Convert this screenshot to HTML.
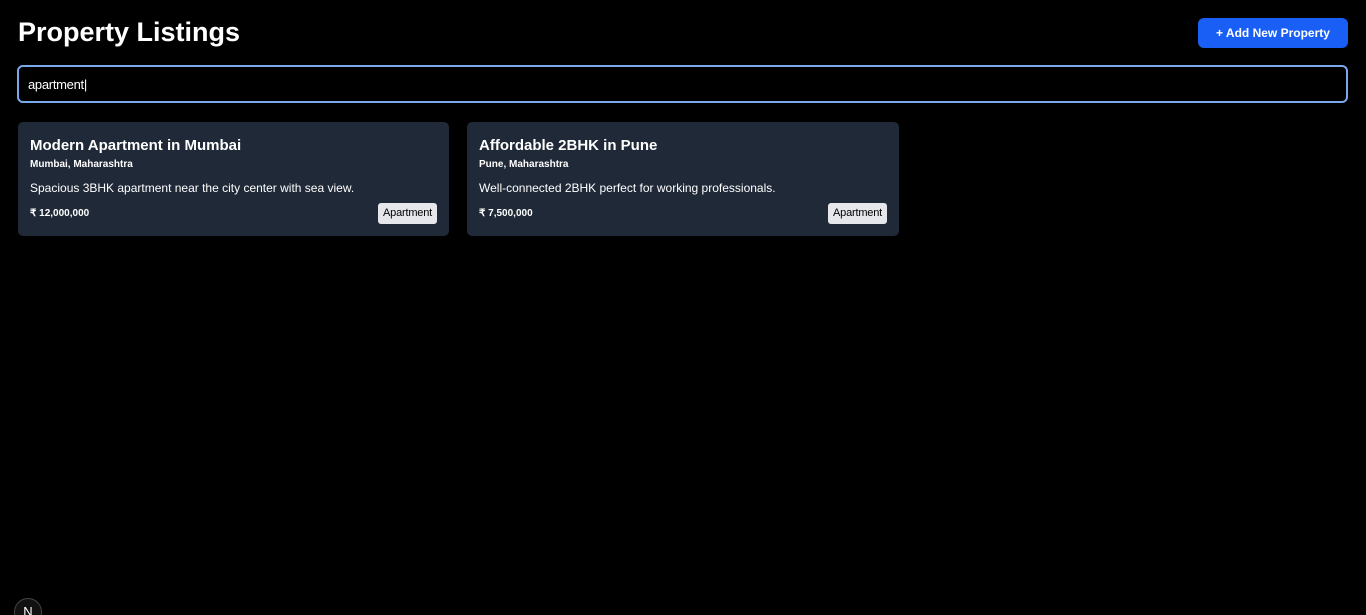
<!DOCTYPE html>
<html><head><meta charset="utf-8"><style>
html,body{margin:0;background:#000;font-family:"Liberation Sans",sans-serif;color:#fff;width:1366px;height:615px;overflow:hidden;position:relative}
h1{position:absolute;left:18px;top:17px;margin:0;font-size:27px;font-weight:bold}
.btn{position:absolute;left:1198px;top:18px;width:150px;height:30px;background:#1a5ff5;border-radius:6px;font-size:12px;font-weight:bold;text-align:center;line-height:30px}
.search{position:absolute;border:2px solid #7aa8e8;border-radius:6px;width:1327px;height:34px;left:17px;top:65px}
.search span{position:absolute;left:9px;top:10px;font-size:13px;letter-spacing:-0.3px}
.card{position:absolute;top:122px;width:431px;height:114px;background:#1f2937;border-radius:5px}
.t{position:absolute;left:12px;top:15px;font-size:15px;font-weight:bold}
.l{position:absolute;left:12px;top:37px;font-size:10px;font-weight:bold}
.d{position:absolute;left:12px;top:59px;font-size:12px}
.p{position:absolute;left:12px;top:86px;font-size:10px;font-weight:bold}
.tag{position:absolute;right:12px;top:81px;background:#e5e7eb;color:#000;font-size:11px;padding:0 5px;height:21px;line-height:21px;border-radius:3px;letter-spacing:-0.2px}
.n{position:absolute;left:14px;top:598px;width:26px;height:26px;border-radius:50%;background:#111;border:1px solid #444;font-size:13px;text-align:center;line-height:26px}
</style></head><body>
<h1>Property Listings</h1>
<div class="btn">+ Add New Property</div>
<div class="search"><span>apartment|</span></div>
<div class="card" style="left:18px"><div class="t">Modern Apartment in Mumbai</div><div class="l">Mumbai, Maharashtra</div><div class="d">Spacious 3BHK apartment near the city center with sea view.</div><div class="p">₹ 12,000,000</div><div class="tag">Apartment</div></div>
<div class="card" style="left:467px;width:432px"><div class="t">Affordable 2BHK in Pune</div><div class="l">Pune, Maharashtra</div><div class="d">Well-connected 2BHK perfect for working professionals.</div><div class="p">₹ 7,500,000</div><div class="tag">Apartment</div></div>
<div class="n">N</div>
</body></html>
